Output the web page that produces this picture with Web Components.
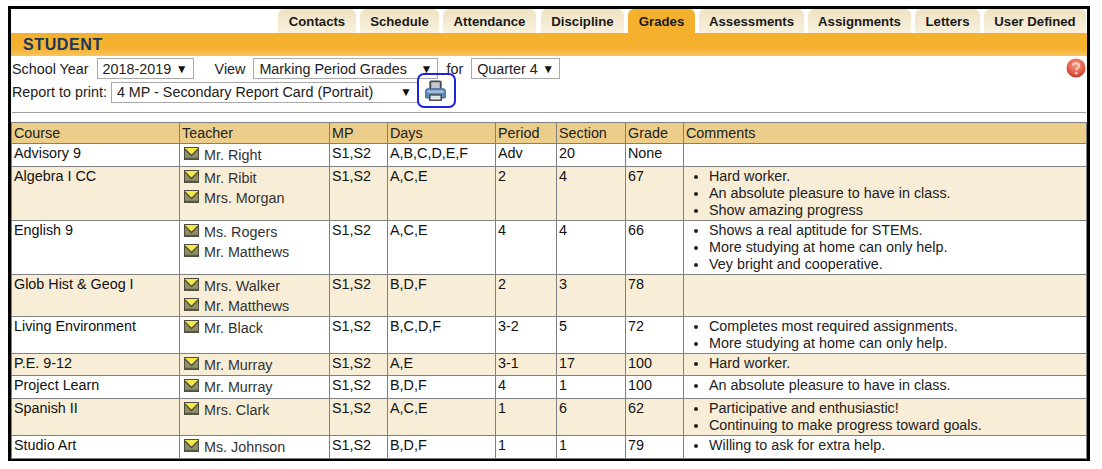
<!DOCTYPE html>
<html>
<head>
<meta charset="utf-8">
<title>Student Grades</title>
<style>
  body { margin: 0; background: #fff; color: #111; font-family: "Liberation Sans", Arial, sans-serif; font-size: 14.35px; }
</style>
</head>
<body>
<student-page></student-page>

<script>
const tabsTemplate = document.createElement('template');
tabsTemplate.innerHTML = `
  <style>
    :host { display: flex; justify-content: flex-end; gap: 4px; height: 24px; padding-right: 1px; }
    .tab {
      display: flex; align-items: center; justify-content: center;
      height: 24px; box-sizing: border-box; padding-top: 1px;
      border-radius: 6px 6px 0 0;
      background: linear-gradient(#efe2c2, #f9f1de);
      font: bold 13.2px "Liberation Sans", Arial, sans-serif; color: #1a1a1a;
    }
    .tab.active { background: #f5b02e; }
  </style>
  <div class="tab" style="width:78px">Contacts</div>
  <div class="tab" style="width:79px">Schedule</div>
  <div class="tab" style="width:93px;margin-right:1px">Attendance</div>
  <div class="tab" style="width:83px">Discipline</div>
  <div class="tab active" style="width:67px">Grades</div>
  <div class="tab" style="width:105px">Assessments</div>
  <div class="tab" style="width:103px">Assignments</div>
  <div class="tab" style="width:65px">Letters</div>
  <div class="tab" style="width:102px">User Defined</div>
`;

class TabStrip extends HTMLElement {
  constructor() {
    super();
    this.attachShadow({mode: 'open'});
    this.shadowRoot.appendChild(tabsTemplate.content.cloneNode(true));
  }
}
customElements.define('tab-strip', TabStrip);

const selectTemplate = document.createElement('template');
selectTemplate.innerHTML = `
  <style>
    :host {
      display: flex; align-items: center; justify-content: space-between;
      box-sizing: border-box; height: 21px; padding: 0 5px 0 5px;
      border: 1px solid #a9a9a9; background: #fff;
      font: 14.35px "Liberation Sans", Arial, sans-serif; color: #222;
    }
    span { font-size: 12px; color: #111; }
  </style>
  <slot></slot><span>&#9660;</span>
`;

class DropSelect extends HTMLElement {
  constructor() {
    super();
    this.attachShadow({mode: 'open'});
    this.shadowRoot.appendChild(selectTemplate.content.cloneNode(true));
  }
}
customElements.define('drop-select', DropSelect);

const teacherTemplate = document.createElement('template');
teacherTemplate.innerHTML = `
  <style>
    :host { display: flex; align-items: flex-start; gap: 5px; height: 20px; padding-left: 4px; }
    svg { width: 15px; height: 13px; margin-top: 2px; flex: none; }
    span { margin-top: 2px; line-height: 16px; color: #333; }
  </style>
  <svg viewBox="0 0 15 13">
    <rect x="0.5" y="0.5" width="14" height="12" fill="#8f8f68" stroke="#4c4c40"/>
    <path d="M1 1 H14 V2.5 L7.5 8.5 L1 2.5 Z" fill="#f6ea4a"/>
    <path d="M1 2 L7.5 8.5 L14 2" fill="none" stroke="#4c4c3a" stroke-width="1.3"/>
    <path d="M1 11.5 H14" stroke="#5a5a48" stroke-width="1.5"/>
  </svg>
  <span><slot></slot></span>
`;

class MailTeacher extends HTMLElement {
  constructor() {
    super();
    this.attachShadow({mode: 'open'});
    this.shadowRoot.appendChild(teacherTemplate.content.cloneNode(true));
  }
}
customElements.define('mail-teacher', MailTeacher);

const gradeRows = [
  {h: 23, course: 'Advisory 9', teachers: ['Mr. Right'], days: 'A,B,C,D,E,F', period: 'Adv', section: '20', grade: 'None', comments: []},
  {h: 54, course: 'Algebra I CC', teachers: ['Mr. Ribit', 'Mrs. Morgan'], days: 'A,C,E', period: '2', section: '4', grade: '67',
    comments: ['Hard worker.', 'An absolute pleasure to have in class.', 'Show amazing progress']},
  {h: 54, course: 'English 9', teachers: ['Ms. Rogers', 'Mr. Matthews'], days: 'A,C,E', period: '4', section: '4', grade: '66',
    comments: ['Shows a real aptitude for STEMs.', 'More studying at home can only help.', 'Vey bright and cooperative.']},
  {h: 42, course: 'Glob Hist &amp; Geog I', teachers: ['Mrs. Walker', 'Mr. Matthews'], days: 'B,D,F', period: '2', section: '3', grade: '78', comments: []},
  {h: 37, course: 'Living Environment', teachers: ['Mr. Black'], days: 'B,C,D,F', period: '3-2', section: '5', grade: '72',
    comments: ['Completes most required assignments.', 'More studying at home can only help.']},
  {h: 22, course: 'P.E. 9-12', teachers: ['Mr. Murray'], days: 'A,E', period: '3-1', section: '17', grade: '100', comments: ['Hard worker.']},
  {h: 23, course: 'Project Learn', teachers: ['Mr. Murray'], days: 'B,D,F', period: '4', section: '1', grade: '100', comments: ['An absolute pleasure to have in class.']},
  {h: 37, course: 'Spanish II', teachers: ['Mrs. Clark'], days: 'A,C,E', period: '1', section: '6', grade: '62',
    comments: ['Participative and enthusiastic!', 'Continuing to make progress toward goals.']},
  {h: 23, course: 'Studio Art', teachers: ['Ms. Johnson'], days: 'B,D,F', period: '1', section: '1', grade: '79', comments: ['Willing to ask for extra help.']}
];

const tableTemplate = document.createElement('template');
tableTemplate.innerHTML = `
  <style>
    :host { display: block; }
    table { width: 100%; table-layout: fixed; border-collapse: collapse; border: 1px solid #808080; }
    th, td {
      border: 1px solid #808080; padding: 0 0 0 2px; vertical-align: top;
      text-align: left; font-weight: normal; line-height: 17px; overflow: hidden; white-space: nowrap;
    }
    th { background: #eccd8a; height: 19px; padding-top: 1px; vertical-align: middle; color: #222; }
    td { padding-top: 1px; }
    tr.alt td { background: #f8edd6; }
    td.teacher { padding-left: 0; }
    ul { margin: 0; padding: 0 0 0 23px; }
    li { line-height: 17px; color: #222; }
  </style>
  <table>
    <colgroup>
      <col style="width:168px"><col style="width:150px"><col style="width:58px"><col style="width:108px">
      <col style="width:61px"><col style="width:69px"><col style="width:58px"><col>
    </colgroup>
    <thead>
      <tr><th>Course</th><th>Teacher</th><th>MP</th><th>Days</th><th>Period</th><th>Section</th><th>Grade</th><th>Comments</th></tr>
    </thead>
    <tbody></tbody>
  </table>
`;

class GradesTable extends HTMLElement {
  constructor() {
    super();
    this.attachShadow({mode: 'open'});
    this.shadowRoot.appendChild(tableTemplate.content.cloneNode(true));
    this.render();
  }

  render() {
    const body = this.shadowRoot.querySelector('tbody');
    gradeRows.forEach((row, i) => {
      const tr = document.createElement('tr');
      if (i % 2 == 1) tr.className = 'alt';
      tr.style.height = row.h + 'px';
      const teachers = row.teachers.map(t => `<mail-teacher>${t}</mail-teacher>`).join('');
      const comments = row.comments.length ? `<ul>${row.comments.map(c => `<li>${c}</li>`).join('')}</ul>` : '';
      tr.innerHTML = `<td>${row.course}</td><td class="teacher">${teachers}</td><td>S1,S2</td><td>${row.days}</td>
        <td>${row.period}</td><td>${row.section}</td><td>${row.grade}</td><td>${comments}</td>`;
      body.appendChild(tr);
    });
  }
}
customElements.define('grades-table', GradesTable);

const pageTemplate = document.createElement('template');
pageTemplate.innerHTML = `
  <style>
    :host {
      display: block; box-sizing: border-box; width: 1082px; height: 455px; margin: 6px 0 0 8px;
      border: 3px solid #000; background: #fff;
    }
    .bar {
      height: 23px; box-sizing: border-box; padding: 3px 0 0 12px;
      background: linear-gradient(#f5b02e 0, #f5b02e 65%, #f8c55e 100%);
      font: bold 16px "Liberation Sans", Arial, sans-serif; letter-spacing: 0.6px; color: #17375e;
    }
    .controls { padding: 2px 0 0 0; height: 57px; box-sizing: border-box; border-bottom: 1px solid #a0a0a0; margin: 0 1px 9px 1px; }
    .line { display: flex; align-items: center; color: #222; }
    .line.first { height: 21px; margin-bottom: 2px; }
    .line.second { height: 22px; }
    .help { margin-left: auto; margin-top: -1px; width: 20px; height: 20px; flex: none; }
    .print {
      box-sizing: border-box; width: 39px; height: 35px; flex: none; margin: -8px 0 -5px -1px;
      display: flex; align-items: center; justify-content: center;
      border: 2px solid #2222dd; border-radius: 7px; position: relative;
    }
    .print svg { width: 21px; height: 22px; margin-left: -2px; }
  </style>
  <tab-strip></tab-strip>
  <div class="bar">STUDENT</div>
  <div class="controls">
    <div class="line first">
      <span>School Year</span>
      <drop-select style="width:97px;margin-left:8px">2018-2019</drop-select>
      <span style="margin-left:21px">View</span>
      <drop-select style="width:185px;margin-left:8px">Marking Period Grades</drop-select>
      <span style="margin-left:8px">for</span>
      <drop-select style="width:89px;margin-left:8px">Quarter 4</drop-select>
      <svg class="help" viewBox="0 0 20 20">
        <defs><radialGradient id="r" cx="50%" cy="35%" r="65%"><stop offset="0" stop-color="#f39a82"/><stop offset="0.7" stop-color="#e25a45"/><stop offset="1" stop-color="#b93a2a"/></radialGradient></defs>
        <circle cx="10" cy="10" r="9.5" fill="url(#r)"/>
        <path d="M6.8 7.4 C7 4.8 13.2 4.6 13.2 7.8 C13.2 10 10.2 10 10.2 12.6" fill="none" stroke="#f8c8ba" stroke-width="2.2"/>
        <circle cx="10.2" cy="15.3" r="1.4" fill="#f8c8ba"/>
      </svg>
    </div>
    <div class="line second">
      <span>Report to print:</span>
      <drop-select style="width:307px;margin-left:4px">4 MP - Secondary Report Card (Portrait)</drop-select>
      <div class="print">
        <svg viewBox="0 0 22 25" preserveAspectRatio="none">
          <path d="M5.5 11 V2.5 Q5.5 1.5 6.5 1.5 H15.5 Q16.5 1.5 16.5 2.5 V11 Z" fill="#c4c8cd" stroke="#474b52" stroke-width="2"/>
          <path d="M0.8 12.5 Q0.8 10 3.5 10 H18.5 Q21.2 10 21.2 12.5 V19.5 Q21.2 20.5 20 20.5 H2 Q0.8 20.5 0.8 19.5 Z" fill="#5f8bbd" stroke="#456a94" stroke-width="1.2"/>
          <rect x="2.5" y="12" width="17" height="2.5" fill="#a9c5e2"/>
          <rect x="5" y="17" width="12" height="6" fill="#e2e5e8" stroke="#474b52" stroke-width="1.6"/>
        </svg>
      </div>
    </div>
  </div>
  <grades-table></grades-table>
`;

class StudentPage extends HTMLElement {
  constructor() {
    super();
    this.attachShadow({mode: 'open'});
    this.shadowRoot.appendChild(pageTemplate.content.cloneNode(true));
  }
}
customElements.define('student-page', StudentPage);
</script>
</body>
</html>
